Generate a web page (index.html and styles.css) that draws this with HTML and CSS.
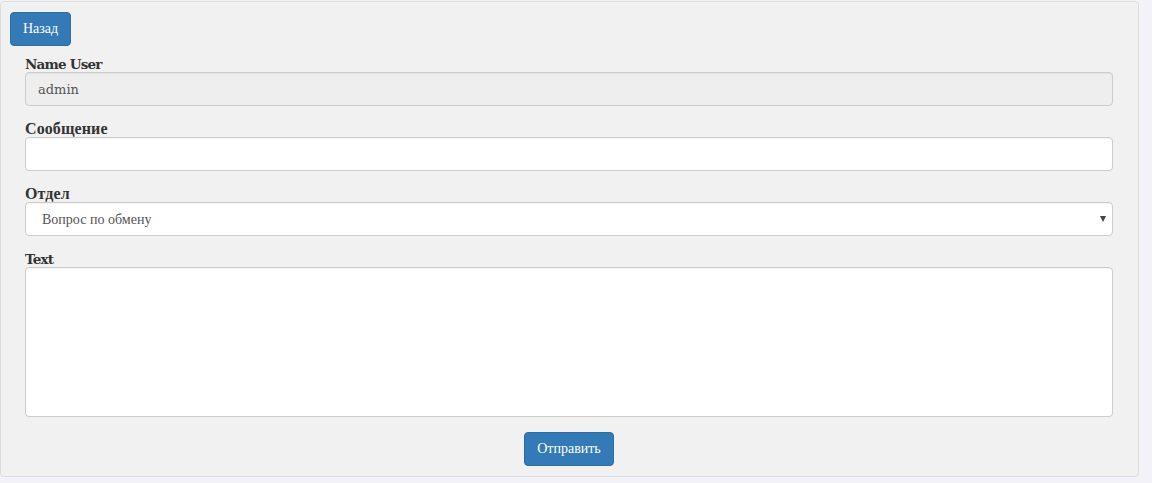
FILE: index.html
```html
<!DOCTYPE html>
<html lang="ru">
<head>
<meta charset="utf-8">
<title>Form</title>
<link rel="stylesheet" href="styles.css">
</head>
<body>
<div class="panel">
  <button class="btn back" type="button">Назад</button>
  <form class="form">
    <div class="group">
      <label class="label latin">Name User</label>
      <input class="control disabled" type="text" value="admin" disabled>
    </div>
    <div class="group">
      <label class="label cyr">Сообщение</label>
      <input class="control" type="text">
    </div>
    <div class="group">
      <label class="label cyr">Отдел</label>
      <div class="select-wrap">
        <select class="control select">
          <option>Вопрос по обмену</option>
        </select>
        <span class="arrow"></span>
      </div>
    </div>
    <div class="group">
      <label class="label latin">Text</label>
      <textarea class="control area"></textarea>
    </div>
    <div class="actions">
      <button class="btn" type="button">Отправить</button>
    </div>
  </form>
</div>
</body>
</html>
```
FILE: styles.css
```css
html, body {
  margin: 0;
  padding: 0;
  background: #f3f2f8;
}
body {
  padding-top: 1px;
  width: 1139px;
  font-family: "Liberation Serif", serif;
  font-size: 14px;
  color: #333;
}
.panel {
  background: #f1f1f1;
  border: 1px solid #dcdcdc;
  border-radius: 4px;
  padding: 10px 10px 10px 9px;
  box-sizing: border-box;
  height: 476px;
}
.btn {
  display: inline-block;
  background: #337ab7;
  border: 1px solid #2e6da4;
  border-radius: 4px;
  color: #fff;
  font-family: "Liberation Serif", serif;
  font-size: 14px;
  line-height: 20px;
  padding: 6px 12px;
  height: 34px;
  box-sizing: border-box;
  cursor: pointer;
}
.back {
  margin-bottom: 10px;
}
.form {
  margin: 0 15px;
}
.group {
  margin-bottom: 15px;
}
.label {
  display: block;
  font-weight: bold;
  height: 16px;
  line-height: 16px;
  color: #333;
}
.latin {
  font-family: "DejaVu Serif", serif;
  font-size: 13.5px;
  letter-spacing: -0.8px;
}
.cyr {
  font-family: "Liberation Serif", serif;
  font-size: 16px;
  letter-spacing: 0.1px;
}
.control {
  display: block;
  width: 100%;
  height: 34px;
  box-sizing: border-box;
  border: 1px solid #ccc;
  border-radius: 4px;
  background: #fff;
  padding: 6px 12px;
  font-family: "Liberation Serif", serif;
  font-size: 14px;
  color: #555;
  margin: 0;
  box-shadow: inset 0 1px 1px rgba(0,0,0,0.05);
}
.disabled {
  background: #eee;
  font-family: "DejaVu Serif", serif;
  font-size: 13px;
  color: #555;
  -webkit-text-fill-color: #555;
  opacity: 1;
}
.select-wrap {
  position: relative;
}
.select {
  appearance: none;
  -webkit-appearance: none;
  padding-left: 16px;
  color: #555;
}
.arrow {
  position: absolute;
  right: 7px;
  top: 14px;
  width: 0;
  height: 0;
  border-left: 3.5px solid transparent;
  border-right: 3.5px solid transparent;
  border-top: 6px solid #444;
}
.area {
  height: 150px;
  resize: none;
}
.actions {
  text-align: center;
}
```
